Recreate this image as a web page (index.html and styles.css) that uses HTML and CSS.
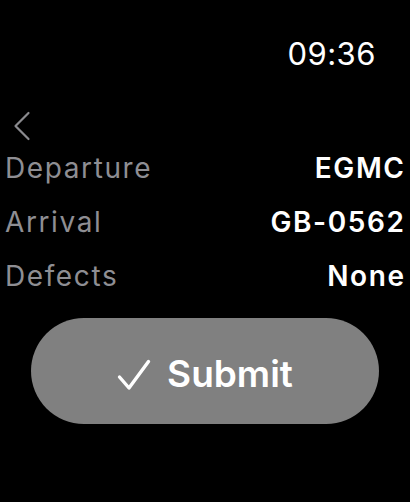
FILE: index.html
```html
<!DOCTYPE html>
<html>
<head>
<meta charset="utf-8">
<link rel="stylesheet" href="styles.css">
</head>
<body>
<div class="screen">
  <div class="status">
    <span class="time">09:36</span>
  </div>
  <div class="nav">
    <svg class="back" width="18" height="30" viewBox="0 0 18 30">
      <path d="M15.5 2 L2.5 15 L15.5 28" fill="none" stroke="#8a8a8e" stroke-width="2.2" stroke-linecap="round" stroke-linejoin="round"/>
    </svg>
  </div>
  <div class="rows">
    <div class="row"><span class="label">Departure</span><span class="value">EGMC</span></div>
    <div class="row"><span class="label">Arrival</span><span class="value">GB-0562</span></div>
    <div class="row"><span class="label">Defects</span><span class="value">None</span></div>
  </div>
  <div class="actions">
    <button class="submit">
      <svg class="check" width="34" height="32" viewBox="0 0 34 32">
        <path d="M2.5 18 L12 29 L31.5 2.5" fill="none" stroke="#fff" stroke-width="3.4" stroke-linecap="round" stroke-linejoin="round"/>
      </svg>
      <span>Submit</span>
    </button>
  </div>
</div>
</body>
</html>
```
FILE: styles.css
```css
html, body {
  margin: 0;
  padding: 0;
  background: #000;
}
body {
  font-family: Inter, "Liberation Sans", sans-serif;
  color: #fff;
}
.screen {
  width: 410px;
  height: 502px;
  display: flex;
  flex-direction: column;
}
.status {
  display: flex;
  justify-content: flex-end;
  padding: 36px 34px 0 0;
  height: 40px;
}
.time {
  font-size: 31px;
  font-weight: 400;
  line-height: 36px;
  letter-spacing: 0.5px;
}
.nav {
  padding: 35px 0 0 13px;
  height: 32px;
  display: flex;
}
.back {
  display: block;
}
.rows {
  display: flex;
  flex-direction: column;
  padding: 0 6px 0 5px;
  margin-top: -2px;
}
.row {
  display: flex;
  justify-content: space-between;
  align-items: baseline;
  height: 54px;
  line-height: 54px;
  font-size: 28px;
}
.label {
  color: #8e8e93;
  font-weight: 400;
  letter-spacing: 1.6px;
}
.value {
  font-weight: 600;
  letter-spacing: 1.6px;
  margin-right: -1.6px;
}
.actions {
  padding: 15px 31px 0 31px;
}
.submit {
  width: 348px;
  height: 106px;
  border: none;
  border-radius: 53px;
  background: #808080;
  color: #fff;
  font-family: inherit;
  font-size: 37px;
  font-weight: 600;
  display: flex;
  align-items: center;
  justify-content: center;
  gap: 16px;
  padding: 5px 0 0 0;
}
.check {
  display: block;
  margin-top: 2px;
}
```
